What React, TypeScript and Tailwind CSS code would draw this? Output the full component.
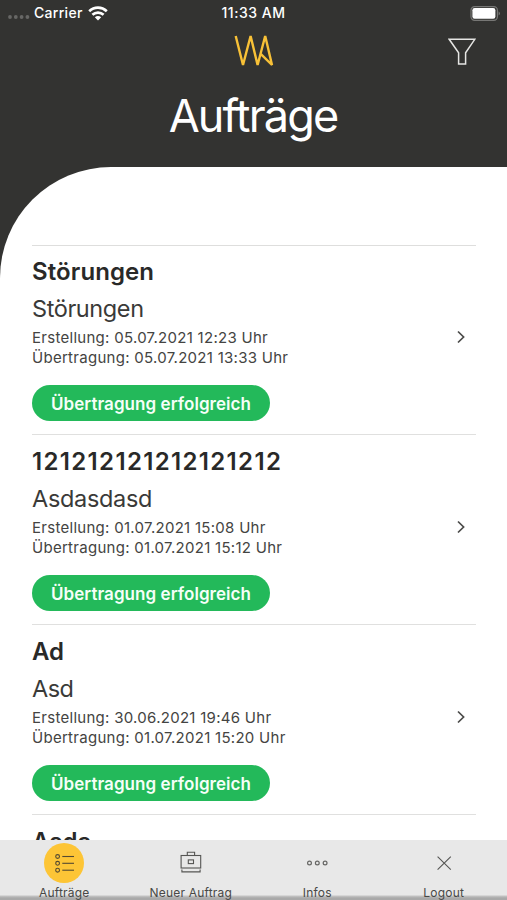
import React from "react";

type Order = {
  title: string;
  titleSpacing?: string;
  subtitle?: string;
  subtitleSpacing?: string;
  created?: string;
  sent?: string;
};

const orders: Order[] = [
  { title: "Störungen", titleSpacing: "tracking-[0.1px]", subtitle: "Störungen", subtitleSpacing: "tracking-[-0.4px]", created: "05.07.2021 12:23", sent: "05.07.2021 13:33" },
  { title: "121212121212121212", titleSpacing: "tracking-[1.35px]", subtitle: "Asdasdasd", subtitleSpacing: "tracking-[-0.33px]", created: "01.07.2021 15:08", sent: "01.07.2021 15:12" },
  { title: "Ad", subtitle: "Asd", subtitleSpacing: "tracking-[-0.5px]", created: "30.06.2021 19:46", sent: "01.07.2021 15:20" },
  { title: "Asda" },
];

function StatusBar() {
  return (
    <div className="grid h-[26px] grid-cols-3 items-center text-[14px] leading-[26px] font-medium text-white">
      <div className="flex items-center pl-2">
        <svg width="22" height="6" viewBox="0 0 22 6" fill="#676765" className="mt-[8px]">
          <circle cx="2" cy="3" r="1.9" />
          <circle cx="7.8" cy="3" r="1.9" />
          <circle cx="13.6" cy="3" r="1.9" />
          <circle cx="19.4" cy="3" r="1.9" />
        </svg>
        <span className="ml-1 tracking-[0.3px]">Carrier</span>
        <svg width="20" height="15" viewBox="0 0 20 15" fill="none" stroke="#fff" strokeWidth="2.7" className="ml-[5px]">
          <path d="M1.2 5.2C6.2 0.5 13.8 0.5 18.8 5.2" />
          <path d="M4.4 8.8C7.6 5.9 12.4 5.9 15.6 8.8" />
          <path d="M6.8 11.3Q10 8.9 13.2 11.3L10 14.5Z" fill="#fff" stroke="none" />
        </svg>
      </div>
      <div className="text-center tracking-[0.5px]">11:33 AM</div>
      <div className="flex justify-end pr-[6px]">
        <svg width="31" height="15" viewBox="0 0 31 15">
          <rect x="1" y="0.7" width="26.4" height="13.6" rx="3.6" fill="none" stroke="#777775" strokeWidth="1.2" />
          <rect x="2.4" y="2.1" width="23" height="10.6" rx="2.2" fill="#fff" />
          <path d="M28.7 5.2Q31 7.5 28.7 9.6Z" fill="#858583" />
        </svg>
      </div>
    </div>
  );
}

function Header() {
  return (
    <header className="h-[167px] text-white">
      <StatusBar />
      <div className="grid h-[50px] grid-cols-3 items-center">
        <div />
        <svg width="40" height="32" viewBox="0 0 40 32" fill="none" stroke="#f8c137" strokeWidth="2.4" strokeLinejoin="bevel" className="justify-self-center">
          <path d="M1.7 1L9 30L16.6 1L23.6 30L31.2 1L38 30L26.7 18.8" />
        </svg>
        <svg width="28" height="28" viewBox="0 0 28 28" fill="none" stroke="#e6e6e4" strokeWidth="1.5" className="mr-[31px] justify-self-end">
          <path d="M1.2 2.3H26.8L17.6 15.8V27H10.6V15.8Z" />
        </svg>
      </div>
      <h1 className="pr-px text-center text-[45px] leading-[80px] tracking-[-1.85px]">Aufträge</h1>
    </header>
  );
}

function OrderItem({ order }: { order: Order }) {
  return (
    <li className="flex h-[190px] items-center border-b border-[#e0e0df] pt-px first:h-[189px] first:pt-0">
      <div className="h-full flex-1 whitespace-nowrap">
        <h2 className={`pt-[10px] text-[24px] leading-[32px] font-semibold text-[#292928] ${order.titleSpacing ?? ""}`}>{order.title}</h2>
        {order.subtitle && (
          <>
            <p className={`mt-[5px] text-[23.5px] leading-[32px] text-[#3a3a38] ${order.subtitleSpacing ?? ""}`}>{order.subtitle}</p>
            <p className="mt-[3px] text-[15px] leading-5 tracking-[0.28px] text-[#444442]">
              Erstellung: {order.created} Uhr
              <br />
              Übertragung: {order.sent} Uhr
            </p>
            <div className="mt-[17px] flex h-[36px] w-[238px] items-center justify-center rounded-full bg-[#23b95a] pt-[2px] text-[17px] leading-6 font-semibold tracking-[0.05px] text-[#f5fff8]">
              Übertragung erfolgreich
            </div>
          </>
        )}
      </div>
      <svg width="10" height="14" viewBox="0 0 10 14" fill="none" stroke="#4b4b49" strokeWidth="1.7" className="mr-[10px] mb-[6px]">
        <path d="M2 1.5L7.6 7L2 12.5" />
      </svg>
    </li>
  );
}

function ListIcon() {
  return (
    <svg width="40" height="40" viewBox="0 0 40 40" fill="none" stroke="#544a31" strokeWidth="1.1">
      <circle cx="20" cy="20" r="20" fill="#fdc536" stroke="none" />
      {[13.5, 20.3, 27.2].map((y) => (
        <g key={y}>
          <circle cx="13.6" cy={y} r="1.9" />
          <path d={`M18.3 ${y}H30`} />
        </g>
      ))}
    </svg>
  );
}

function CaseIcon() {
  return (
    <svg width="40" height="40" viewBox="0 0 40 40" fill="none" stroke="#555553" strokeWidth="1.1">
      <rect x="10.1" y="12.5" width="19.6" height="12.5" />
      <path d="M16.3 12.5V9.3H23.6V12.5M10.9 26.5V28.9H29.1V26.5" />
      <rect x="17.3" y="16.9" width="5.2" height="3.7" />
    </svg>
  );
}

function DotsIcon() {
  return (
    <svg width="40" height="40" viewBox="0 0 40 40" fill="none" stroke="#666664" strokeWidth="1.2">
      <circle cx="12.5" cy="20" r="1.9" />
      <circle cx="20.3" cy="20" r="1.9" />
      <circle cx="28.1" cy="20" r="1.9" />
    </svg>
  );
}

function CloseIcon() {
  return (
    <svg width="40" height="40" viewBox="0 0 40 40" fill="none" stroke="#555553" strokeWidth="1.1">
      <path d="M13.6 13.7L26.8 26.7M26.8 13.7L13.6 26.7" />
    </svg>
  );
}

const tabs = [
  { label: "Aufträge", Icon: ListIcon },
  { label: "Neuer Auftrag", Icon: CaseIcon },
  { label: "Infos", Icon: DotsIcon },
  { label: "Logout", Icon: CloseIcon },
];

export default function App() {
  return (
    <div className="flex h-[900px] w-[507px] flex-col overflow-hidden bg-[#333331] font-['Inter','Liberation_Sans',sans-serif]">
      <Header />
      <main className="min-h-0 flex-1 overflow-hidden rounded-tl-[111px] bg-white pt-[78px] pr-[31px] pl-8">
        <ul className="border-t border-[#dededd]">
          {orders.map((order) => (
            <OrderItem key={order.title} order={order} />
          ))}
        </ul>
      </main>
      <nav className="grid h-[60px] shrink-0 grid-cols-4 overflow-hidden bg-[linear-gradient(to_bottom,#e8e8e8_55px,#c4c4c4_56px,#a9a9a9_58px)] pl-px">
        {tabs.map(({ label, Icon }) => (
          <div key={label} className="flex flex-col items-center pt-[3px]">
            <Icon />
            <span className="mt-[2px] text-[12px] leading-[15px] tracking-[0.2px] whitespace-nowrap text-[#484846]">{label}</span>
          </div>
        ))}
      </nav>
    </div>
  );
}
